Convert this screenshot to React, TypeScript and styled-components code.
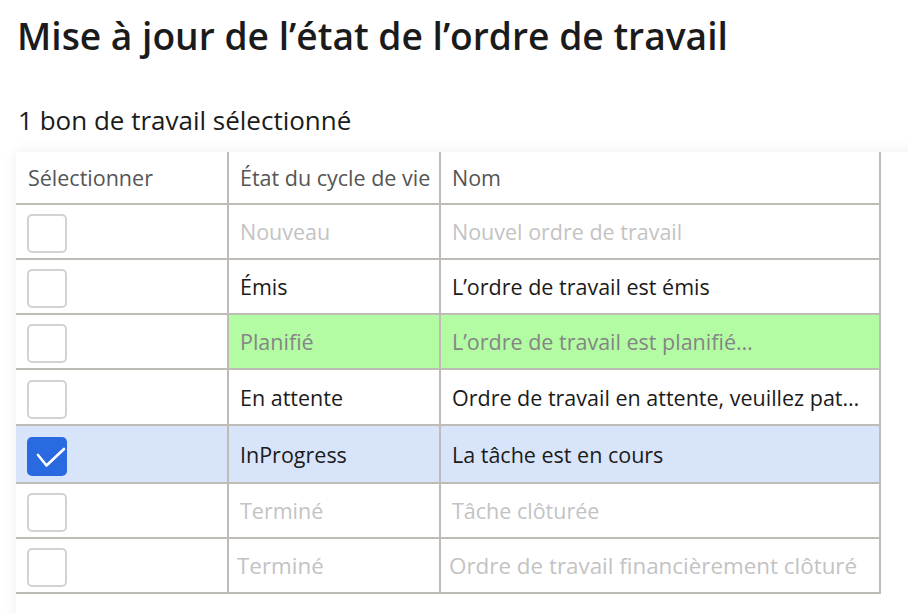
import styled, { createGlobalStyle } from "styled-components";

const GlobalStyle = createGlobalStyle`
  html, body {
    margin: 0;
    padding: 0;
    background: #ffffff;
    overflow: hidden;
  }
  body {
    font-family: "Open Sans", "Noto Sans", sans-serif;
    color: #1b1b1b;
  }
`;

type Tone = "muted" | "normal" | "planned" | "active";

interface WorkOrder {
  id: number;
  state: string;
  name: string;
  tone: Tone;
  checked?: boolean;
  height?: number;
  wide?: boolean;
}

const orders: WorkOrder[] = [
  { id: 1, state: "Nouveau", name: "Nouvel ordre de travail", tone: "muted" },
  { id: 2, state: "Émis", name: "L’ordre de travail est émis", tone: "normal" },
  { id: 3, state: "Planifié", name: "L’ordre de travail est planifié…", tone: "planned" },
  { id: 4, state: "En attente", name: "Ordre de travail en attente, veuillez pat…", tone: "normal", height: 54 },
  { id: 5, state: "InProgress", name: "La tâche est en cours", tone: "active", checked: true, height: 56 },
  { id: 6, state: "Terminé", name: "Tâche clôturée", tone: "muted" },
  { id: 7, state: "Terminé", name: "Ordre de travail financièrement clôturé", tone: "muted", wide: true },
];

function App() {
  const selected = orders.filter((o) => o.checked).length;
  return (
    <Page>
      <GlobalStyle />
      <Title>Mise à jour de l’état de l’ordre de travail</Title>
      <Subtitle>{selected} bon de travail sélectionné</Subtitle>
      <Card>
        <Grid>
          <HeaderRow>
            <HeadCell>Sélectionner</HeadCell>
            <HeadCell>État du cycle de vie</HeadCell>
            <HeadCell>Nom</HeadCell>
          </HeaderRow>
          {orders.map((order) => (
            <Row
              key={order.id}
              $active={order.tone === "active"}
              $height={order.height ?? 53}
            >
              <CheckCell>
                <Checkbox $checked={!!order.checked}>
                  {order.checked && (
                    <svg width="40" height="39" viewBox="0 0 40 39">
                      <path
                        d="M11 18 L19.5 28.5 L37 12"
                        fill="none"
                        stroke="#ffffff"
                        strokeWidth="2.6"
                        strokeLinecap="round"
                        strokeLinejoin="round"
                      />
                    </svg>
                  )}
                </Checkbox>
              </CheckCell>
              <Cell $tone={order.tone} $wide={!!order.wide}>
                {order.state}
              </Cell>
              <Cell $tone={order.tone} $wide={!!order.wide}>
                {order.name}
              </Cell>
            </Row>
          ))}
        </Grid>
      </Card>
    </Page>
  );
}

export default App;

const Page = styled.div`
  width: 908px;
  height: 613px;
  overflow: hidden;
`;

const Title = styled.h1`
  margin: 0;
  padding: 13px 0 0 17px;
  font-size: 37.2px;
  font-weight: 600;
  line-height: 46px;
  color: #1b1b1b;
`;

const Subtitle = styled.div`
  padding: 46px 0 0 18px;
  font-size: 26px;
  line-height: 30px;
  color: #1b1b1b;
`;

const Card = styled.div`
  margin: 17px 0 0 16px;
  width: 920px;
  height: 480px;
  background: #ffffff;
  box-shadow: 0 0 14px rgba(0, 0, 0, 0.07);
`;

const Grid = styled.div`
  width: 863px;
  border-right: 2px solid #bfbbb7;
`;

const columns = "213px 212px 438px";

const HeaderRow = styled.div`
  display: grid;
  grid-template-columns: ${columns};
  height: 51px;
  border-bottom: 2px solid #bfbbb7;
`;

const HeadCell = styled.div`
  display: flex;
  align-items: center;
  padding: 0 11px 0 12px;
  font-size: 21.5px;
  color: #555555;
  white-space: nowrap;
  overflow: hidden;

  & + & {
    padding-left: 11px;
  }

  &:not(:last-child) {
    border-right: 2px solid #bfbbb7;
  }
`;

const Row = styled.div<{ $active: boolean; $height: number }>`
  display: grid;
  grid-template-columns: ${columns};
  height: ${(p) => p.$height}px;
  border-bottom: 2px solid #bfbbb7;
  background: ${(p) => (p.$active ? "#d8e4f9" : "#ffffff")};
`;

const CheckCell = styled.div`
  display: flex;
  align-items: center;
  padding: 4px 0 0 11px;
  border-right: 2px solid #bfbbb7;
`;

const Checkbox = styled.div<{ $checked: boolean }>`
  box-sizing: border-box;
  width: 40px;
  height: 39px;
  border-radius: 5px;
  display: flex;
  align-items: center;
  justify-content: center;
  border: ${(p) => (p.$checked ? "none" : "2px solid #d2d2d2")};
  background: ${(p) => (p.$checked ? "#2a6ae1" : "#ffffff")};
`;

const toneColor: Record<Tone, string> = {
  muted: "#c3c3c3",
  normal: "#1b1b1b",
  planned: "#858585",
  active: "#1b1b1b",
};

const Cell = styled.div<{ $tone: Tone; $wide: boolean }>`
  display: flex;
  align-items: center;
  padding: 0 ${(p) => (p.$wide ? 8 : 11)}px;
  font-size: ${(p) => (p.$wide ? 22.4 : 21.5)}px;
  color: ${(p) => toneColor[p.$tone]};
  background: ${(p) => (p.$tone === "planned" ? "#b3fca3" : "transparent")};
  min-width: 0;
  white-space: nowrap;
  overflow: hidden;

  &:not(:last-child) {
    border-right: 2px solid #bfbbb7;
  }
`;
